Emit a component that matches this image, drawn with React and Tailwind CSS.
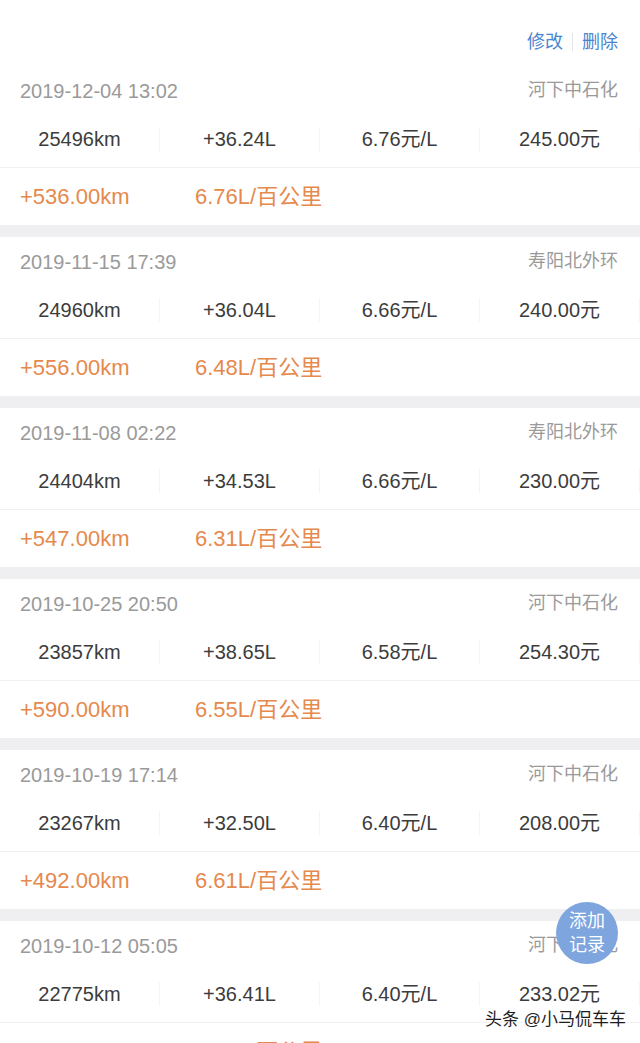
const records = [
  { date: "2019-12-04 13:02", place: "河下中石化", odo: "25496km", fuel: "+36.24L", price: "6.76元/L", cost: "245.00元", dist: "+536.00km", eco: "6.76L/百公里" },
  { date: "2019-11-15 17:39", place: "寿阳北外环", odo: "24960km", fuel: "+36.04L", price: "6.66元/L", cost: "240.00元", dist: "+556.00km", eco: "6.48L/百公里" },
  { date: "2019-11-08 02:22", place: "寿阳北外环", odo: "24404km", fuel: "+34.53L", price: "6.66元/L", cost: "230.00元", dist: "+547.00km", eco: "6.31L/百公里" },
  { date: "2019-10-25 20:50", place: "河下中石化", odo: "23857km", fuel: "+38.65L", price: "6.58元/L", cost: "254.30元", dist: "+590.00km", eco: "6.55L/百公里" },
  { date: "2019-10-19 17:14", place: "河下中石化", odo: "23267km", fuel: "+32.50L", price: "6.40元/L", cost: "208.00元", dist: "+492.00km", eco: "6.61L/百公里" },
  { date: "2019-10-12 05:05", place: "河下中石化", odo: "22775km", fuel: "+36.41L", price: "6.40元/L", cost: "233.02元", dist: "+480.00km", eco: "6.80L/百公里" },
];

function RecordCard({ record, first }) {
  return (
    <section className={first ? "bg-white" : "border-t-[12px] border-[#efeff2] bg-white"}>
      <div className="flex h-[49px] items-center justify-between pl-5 pr-[22px]">
        <span className="text-[20px] text-[#9a9a9a]">{record.date}</span>
        <span className="text-[18px] text-[#9a9a9a]">{record.place}</span>
      </div>

      <div className="grid h-[53px] grid-cols-4 items-center border-b border-[#f0f0f0] pb-[5px] text-[20px] text-[#3c3c3c]">
        {[record.odo, record.fuel, record.price, record.cost].map((value, i) => (
          <div key={i} className="flex h-[24px] items-center justify-center border-r border-[#f4f4f4]">
            {value}
          </div>
        ))}
      </div>

      <div className="flex h-[57px] items-center pl-5 text-[22px] text-[#e5894d]">
        <span className="w-[175px]">{record.dist}</span>
        <span>{record.eco}</span>
      </div>
    </section>
  );
}

export default function App() {
  return (
    <div
      className="relative h-[1043px] w-[640px] overflow-hidden bg-white"
      style={{ fontFamily: '"Liberation Sans", "Noto Sans CJK SC", sans-serif' }}
    >
      <div className="flex h-[66px] items-center justify-end pr-[22px] pt-[18px] text-[18px] text-[#4a86d0]">
        <span>修改</span>
        <span className="mx-[9px] h-[18px] w-px bg-[#e4e4e4]" />
        <span>删除</span>
      </div>

      {records.map((record, i) => (
        <RecordCard key={record.date} record={record} first={i === 0} />
      ))}

      <button className="absolute left-[556px] top-[902px] flex h-[62px] w-[62px] flex-col items-center justify-center rounded-full bg-[#7ea5de] text-[18px] leading-[24px] text-white">
        <span>添加</span>
        <span>记录</span>
      </button>

      <div className="absolute bottom-[11px] right-[14px] text-[17px] text-[#1e1e1e] [text-shadow:0_0_2px_#fff,0_0_2px_#fff,0_0_3px_#fff]">
        头条 @小马侃车车
      </div>
    </div>
  );
}
